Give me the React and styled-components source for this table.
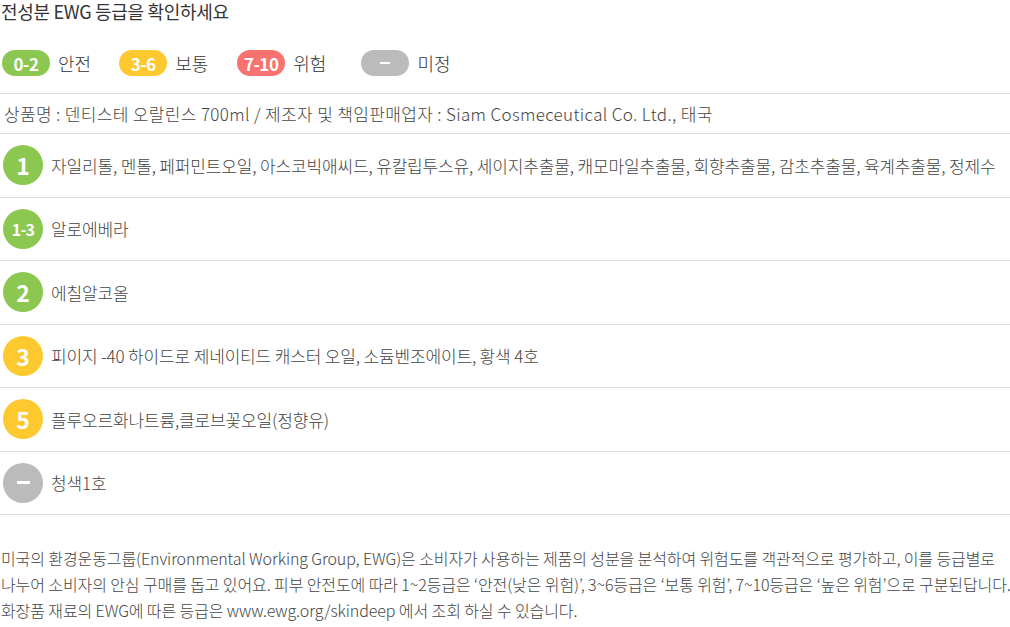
import React from "react";
import styled, { createGlobalStyle } from "styled-components";

const Global = createGlobalStyle`
  html, body { margin: 0; padding: 0; background: #fff; }
  body {
    font-family: "Noto Sans CJK KR", "Noto Sans", sans-serif;
    color: #333;
    -webkit-font-smoothing: antialiased;
  }
`;

const COLORS = {
  safe: "#8cc751",
  mid: "#fdc92f",
  high: "#f87370",
  none: "#bbbbbb",
};

const Page = styled.div`
  width: 1010px;
`;

const Title = styled.h2`
  margin: 0;
  padding: 0 0 0 1px;
  font-size: 18px;
  font-weight: 400;
  line-height: 22px;
  letter-spacing: -0.3px;
  color: #333;
`;

const Legend = styled.div`
  display: flex;
  align-items: center;
  height: 26px;
  margin-top: 28px;
  padding-left: 2px;
`;

const LegendItem = styled.div`
  display: flex;
  align-items: center;
  margin-right: ${(p) => p.$space}px;
`;

const Pill = styled.span`
  display: inline-flex;
  align-items: center;
  justify-content: center;
  width: 48px;
  height: 26px;
  border-radius: 13px;
  background: ${(p) => COLORS[p.$tone]};
  color: #fff;
  font-size: 17px;
  font-weight: 700;
  letter-spacing: -0.5px;
`;

const PillDash = styled.span`
  display: block;
  width: 10px;
  height: 2px;
  background: #fff;
`;

const LegendLabel = styled.span`
  margin-left: 8px;
  font-size: 18px;
  font-weight: 300;
  color: #333;
  letter-spacing: 0;
`;

const Table = styled.div`
  margin-top: 17px;
  border-top: 1px solid #dcdcdc;
`;

const InfoRow = styled.div`
  display: flex;
  align-items: center;
  height: 39px;
  padding-left: 4px;
  border-bottom: 1px solid #dcdcdc;
  font-size: 17px;
  font-weight: 300;
  color: #444;
  letter-spacing: 0.35px;
  white-space: nowrap;
`;

const Row = styled.div`
  display: flex;
  align-items: center;
  height: 62.5px;
  padding-left: 3px;
  border-bottom: 1px solid #dcdcdc;
`;

const Grade = styled.span`
  flex: none;
  display: inline-flex;
  align-items: center;
  justify-content: center;
  width: 40px;
  height: 40px;
  border-radius: 50%;
  background: ${(p) => COLORS[p.$tone]};
  color: #fff;
  font-weight: 700;
  font-size: ${(p) => (p.$small ? "16px" : "23px")};
  letter-spacing: ${(p) => (p.$small ? "-0.8px" : "0")};
`;

const Dash = styled.span`
  display: block;
  width: 13px;
  height: 3px;
  background: #fff;
`;

const Ingredients = styled.span`
  margin-left: 8px;
  font-size: 17px;
  font-weight: 300;
  color: #444;
  letter-spacing: -0.15px;
  white-space: nowrap;
`;

const Note = styled.p`
  margin: 30px 0 0;
  padding-left: 1px;
  font-size: 16px;
  font-weight: 300;
  line-height: 26px;
  color: #444;
  letter-spacing: -0.1px;
  white-space: nowrap;
`;

const legend = [
  { tone: "safe", text: "0-2", label: "안전", space: 28 },
  { tone: "mid", text: "3-6", label: "보통", space: 29 },
  { tone: "high", text: "7-10", label: "위험", space: 35 },
  { tone: "none", text: null, label: "미정", space: 0 },
];

const rows = [
  {
    tone: "safe",
    grade: "1",
    text: "자일리톨, 멘톨, 페퍼민트오일, 아스코빅애씨드, 유칼립투스유, 세이지추출물, 캐모마일추출물, 회향추출물, 감초추출물, 육계추출물, 정제수",
  },
  { tone: "safe", grade: "1-3", small: true, text: "알로에베라" },
  { tone: "safe", grade: "2", text: "에칠알코올" },
  {
    tone: "mid",
    grade: "3",
    text: "피이지 -40 하이드로 제네이티드 캐스터 오일, 소듐벤조에이트, 황색 4호",
  },
  { tone: "mid", grade: "5", text: "플루오르화나트륨,클로브꽃오일(정향유)" },
  { tone: "none", grade: null, text: "청색1호" },
];

export default function App() {
  return (
    <Page>
      <Global />
      <Title>전성분 EWG 등급을 확인하세요</Title>
      <Legend>
        {legend.map((l) => (
          <LegendItem key={l.label} $space={l.space}>
            <Pill $tone={l.tone}>{l.text ?? <PillDash />}</Pill>
            <LegendLabel>{l.label}</LegendLabel>
          </LegendItem>
        ))}
      </Legend>
      <Table>
        <InfoRow>
          상품명 : 덴티스테 오랄린스 700ml / 제조자 및 책임판매업자 : Siam Cosmeceutical Co. Ltd., 태국
        </InfoRow>
        {rows.map((r, i) => (
          <Row key={i}>
            <Grade $tone={r.tone} $small={r.small}>
              {r.grade ?? <Dash />}
            </Grade>
            <Ingredients>{r.text}</Ingredients>
          </Row>
        ))}
      </Table>
      <Note>
        미국의 환경운동그룹(Environmental Working Group, EWG)은 소비자가 사용하는 제품의 성분을 분석하여 위험도를 객관적으로 평가하고, 이를 등급별로
        <br />
        나누어 소비자의 안심 구매를 돕고 있어요. 피부 안전도에 따라 1~2등급은 ‘안전(낮은 위험)’, 3~6등급은 ‘보통 위험’, 7~10등급은 ‘높은 위험’으로 구분된답니다.
        <br />
        화장품 재료의 EWG에 따른 등급은 www.ewg.org/skindeep 에서 조회 하실 수 있습니다.
      </Note>
    </Page>
  );
}
